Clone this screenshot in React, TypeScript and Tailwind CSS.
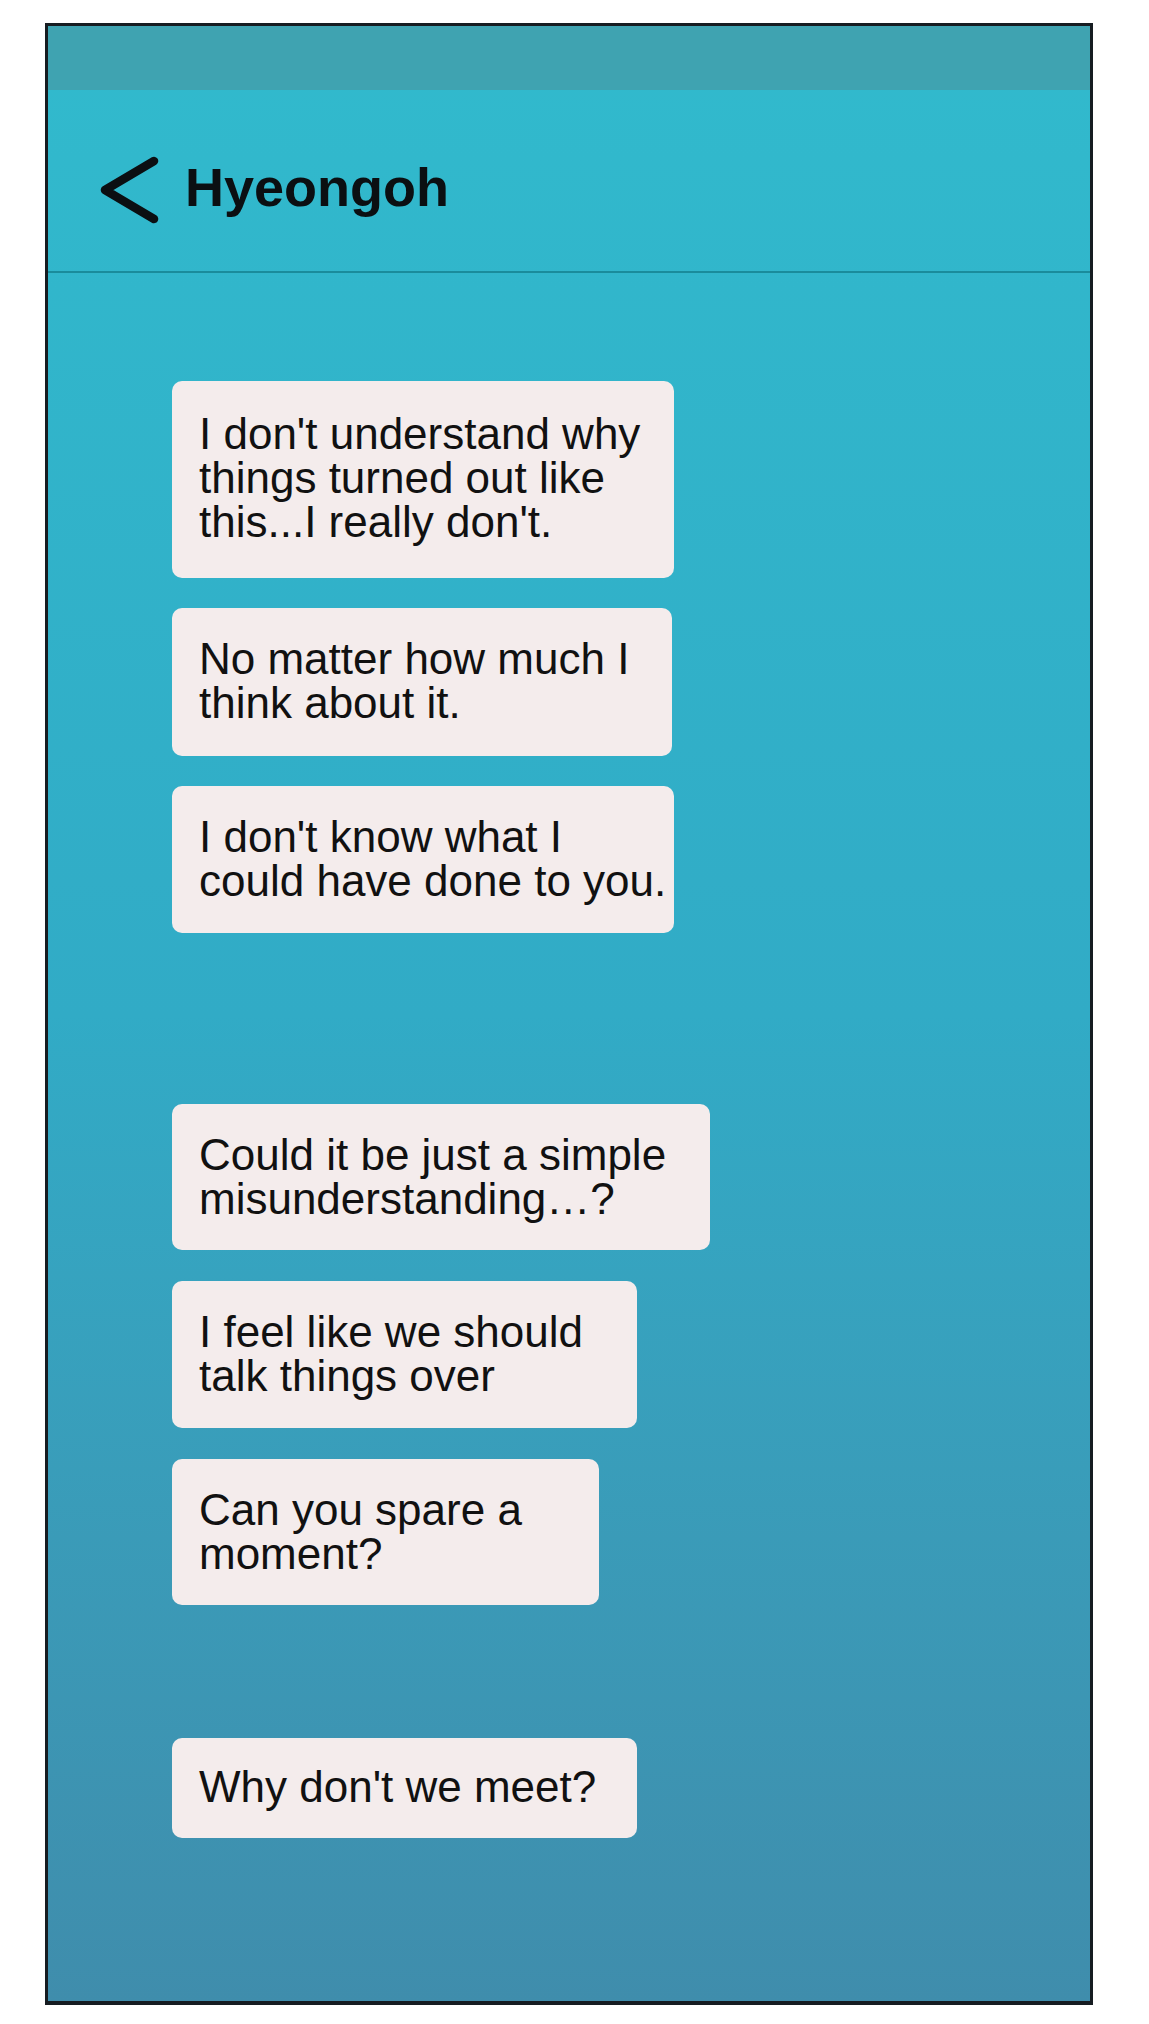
import React from 'react';

type Msg = { lines: string[]; w: number; py: string };

// chat is split into bursts; bursts are separated by a larger gap
const bursts: { mt: string; gap: string; msgs: Msg[] }[] = [
  {
    mt: 'mt-[108px]',
    gap: 'gap-[30px]',
    msgs: [
      { lines: ["I don't understand why", 'things turned out like', "this...I really don't."], w: 502, py: 'pt-[31px] pb-[34px]' },
      { lines: ['No matter how much I', 'think about it.'], w: 500, py: 'pt-[29px] pb-[31px]' },
      { lines: ["I don't know what I", 'could have done to you.'], w: 502, py: 'pt-[29px] pb-[30px]' },
    ],
  },
  {
    mt: 'mt-[171px]',
    gap: 'gap-[31px]',
    msgs: [
      { lines: ['Could it be just a simple', 'misunderstanding…?'], w: 538, py: 'pt-[29px] pb-[29px]' },
      { lines: ['I feel like we should', 'talk things over'], w: 465, py: 'pt-[29px] pb-[30px]' },
      { lines: ['Can you spare a', 'moment?'], w: 427, py: 'pt-[29px] pb-[29px]' },
    ],
  },
  {
    mt: 'mt-[133px]',
    gap: 'gap-[31px]',
    msgs: [{ lines: ["Why don't we meet?"], w: 465, py: 'pt-[27px] pb-[29px]' }],
  },
];

function BackIcon() {
  return (
    <svg width="60" height="68" viewBox="0 0 60 68" fill="none">
      <path d="M55 5 L6 34 L55 63" stroke="#0b0f12" strokeWidth="8.5" strokeLinecap="round" strokeLinejoin="round" />
    </svg>
  );
}

function Bubble({ m }: { m: Msg }) {
  return (
    <div
      className={`bg-[#f4ecec] rounded-[10px] pl-[27px] ${m.py} text-[44px] leading-[44px] text-[#111] font-['Liberation_Sans',Arial,sans-serif]`}
      style={{ width: m.w }}
    >
      {m.lines.map((l, i) => (
        <div key={i} className="whitespace-nowrap">{l}</div>
      ))}
    </div>
  );
}

export default function App() {
  return (
    <div className="min-h-screen bg-white pt-[23px] pl-[45px]">
      <div className="w-[1048px] h-[1982px] border-[3px] border-b-[4px] border-[#161c21] flex flex-col overflow-hidden bg-gradient-to-b from-[#31bacd] via-[#31abc6] to-[#3f8dac]">
        {/* status bar */}
        <div className="h-[64px] bg-[#3fa3b1] shrink-0" />

        {/* title bar */}
        <div className="h-[183px] shrink-0 flex items-center pt-[18px] pl-[51px] border-b-2 border-[#1a8c9c]">
          <BackIcon />
          <span className="ml-[26px] -mt-[5px] text-[54px] font-bold leading-none text-[#0b0f12] font-['Liberation_Sans',Arial,sans-serif]">
            Hyeongoh
          </span>
        </div>

        {/* messages */}
        <div className="flex-1 pl-[124px]">
          {bursts.map((b, i) => (
            <div key={i} className={`${b.mt} flex flex-col ${b.gap}`}>
              {b.msgs.map((m, j) => (
                <Bubble key={j} m={m} />
              ))}
            </div>
          ))}
        </div>
      </div>
    </div>
  );
}
